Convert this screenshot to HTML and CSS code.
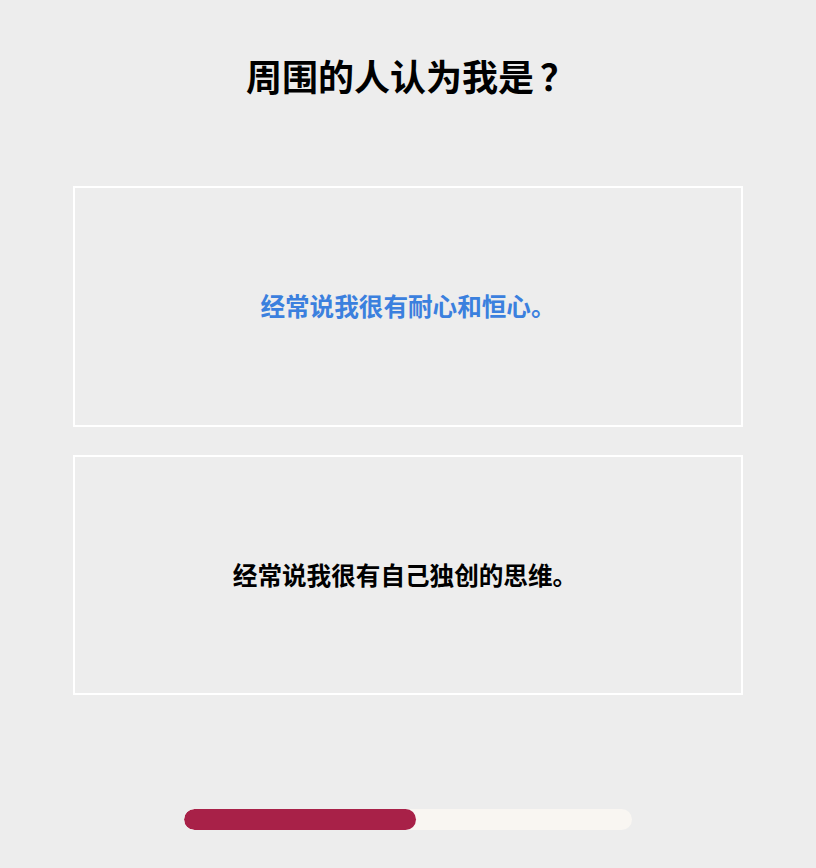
FILE: index.html
```html
<!DOCTYPE html>
<html lang="zh">
<head>
<meta charset="utf-8">
<link rel="stylesheet" href="styles.css">
</head>
<body>
<div class="page">
  <h1 class="title">周围的人认为我是<span class="qmark">？</span></h1>
  <div class="options">
    <div class="card card-active">经常说我很有耐心和恒心。</div>
    <div class="card card-second">经常说我很有自己独创的思维。</div>
  </div>
  <div class="progress"><div class="progress-fill" style="width:232px"></div></div>
</div>
</body>
</html>
```
FILE: styles.css
```css
html, body {
  margin: 0;
  padding: 0;
  background: #ededed;
}
body {
  font-family: "Noto Sans CJK SC", "Noto Sans", sans-serif;
  color: #000;
}
.page {
  width: 816px;
  height: 868px;
  display: flex;
  flex-direction: column;
  align-items: center;
}
.title {
  margin: 49px 0 0;
  padding-left: 6px;
  font-size: 36px;
  font-weight: 700;
  line-height: 52px;
  text-align: center;
}
.qmark {
  margin-left: 6px;
}
.options {
  margin-top: 85px;
  display: flex;
  flex-direction: column;
  gap: 28px;
}
.card {
  box-sizing: border-box;
  width: 670px;
  height: 241px;
  border: 2px solid #ffffff;
  display: flex;
  align-items: center;
  justify-content: center;
  font-size: 24.6px;
  font-weight: 700;
  padding-bottom: 3px;
}
.card-active {
  color: #3b80de;
}
.card-second {
  height: 240px;
  padding-bottom: 2px;
  padding-right: 6px;
}
.progress {
  margin-top: 114px;
  width: 448px;
  height: 21px;
  border-radius: 11px;
  background: #f9f6f2;
  overflow: hidden;
}
.progress-fill {
  height: 100%;
  border-radius: 11px;
  background: #a82148;
}
```
